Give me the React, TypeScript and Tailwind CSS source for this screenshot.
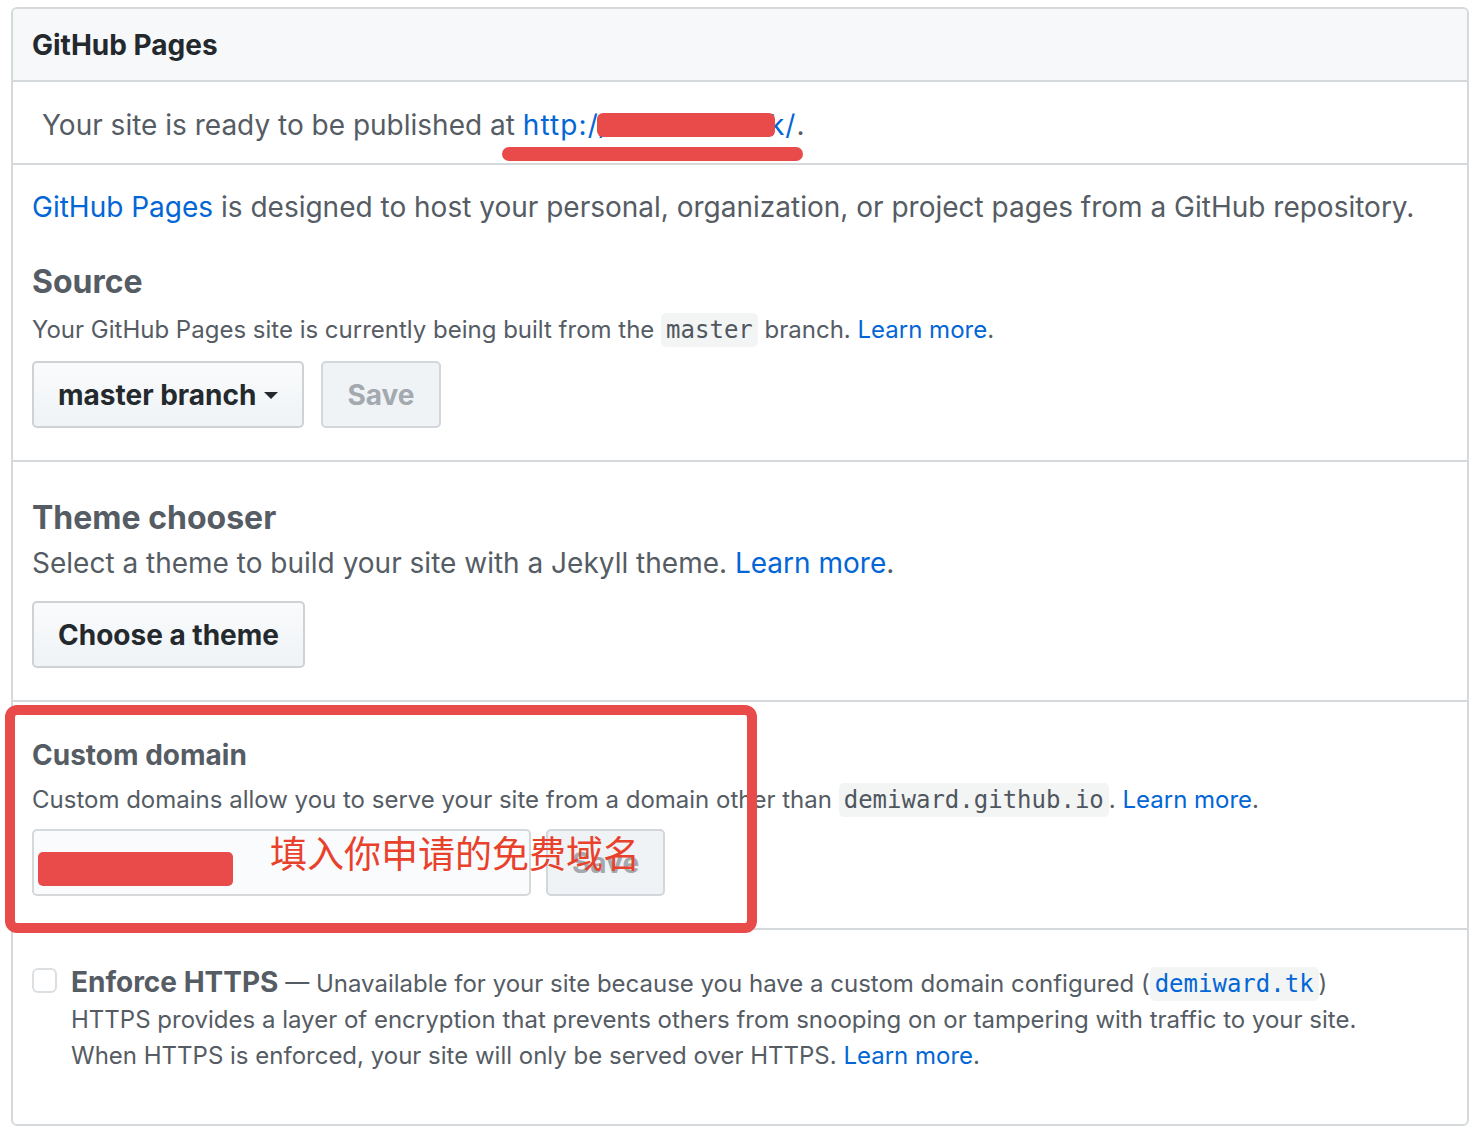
import { useState } from 'react';

const sans = { fontFamily: 'Inter, "Noto Sans", "Liberation Sans", sans-serif' };
const mono = { fontFamily: '"DejaVu Sans Mono", "Liberation Mono", monospace' };
const cjk = { fontFamily: '"Noto Sans CJK SC", "Noto Sans", sans-serif' };

function Code({ children, blue }: { children: React.ReactNode; blue?: boolean }) {
  return (
    <code
      style={mono}
      className={`rounded-[5px] bg-[#f3f4f4] px-[5px] py-[3px] text-[24px] ${blue ? 'text-[#0366d6]' : 'text-[#4f565e]'}`}
    >
      {children}
    </code>
  );
}

function Btn({ children, disabled, className = '' }: { children: React.ReactNode; disabled?: boolean; className?: string }) {
  return (
    <button
      className={`flex h-[67px] items-center rounded-[5px] border-2 px-6 text-[28px] font-bold ${
        disabled
          ? 'border-[#d3d6da] bg-[#eff3f6] text-[#a3a9af]'
          : 'border-[#cfd2d5] bg-gradient-to-b from-[#fafbfc] to-[#eff3f6] text-[#24292e]'
      } ${className}`}
    >
      {children}
    </button>
  );
}

export default function App() {
  const [https, setHttps] = useState(false);

  return (
    <div style={sans} className="relative h-[1142px] w-[1484px] bg-white pt-[7px] text-[#555c64]">
      <div className="ml-[11px] w-[1458px] overflow-hidden rounded-md border-2 border-[#d6d9dc]">
        {/* header */}
        <div className="flex h-[73px] items-center border-b-2 border-[#d6d9dc] bg-[#f6f8fa] px-[19px]">
          <h2 className="text-[28px] font-bold text-[#24292e]">GitHub Pages</h2>
        </div>

        {/* notice */}
        <div className="flex h-[83px] items-center border-b-2 border-[#d6d9dc] px-[29px] pt-[4px] text-[28px]">
          Your site is ready to be published at&nbsp;
          <a className="tracking-[1.1px] text-[#0366d6]">http://demiward.tk/</a>.
        </div>

        {/* source */}
        <div className="border-b-2 border-[#d6d9dc] px-[19px] pb-[32px] pt-[24px]">
          <p className="text-[28px] leading-[36px]">
            <a className="text-[#0366d6]">GitHub Pages</a> is designed to host your personal, organization, or project
            pages from a GitHub repository.
          </p>
          <h3 className="mt-[37px] text-[32px] font-bold leading-[40px]">Source</h3>
          <p className="mt-[12px] text-[24px] leading-[32px]">
            Your GitHub Pages site is currently being built from the <Code>master</Code> branch.{' '}
            <a className="text-[#0366d6]">Learn more</a>.
          </p>
          <div className="mt-[15px] flex gap-[17px]">
            <Btn>
              master branch
              <span className="ml-[8px] mt-[2px] h-0 w-0 border-x-[7px] border-t-[7px] border-x-transparent border-t-[#24292e]" />
            </Btn>
            <Btn disabled>Save</Btn>
          </div>
        </div>

        {/* theme chooser */}
        <div className="border-b-2 border-[#d6d9dc] px-[19px] pb-[32px] pt-[36px]">
          <h3 className="text-[32px] font-bold leading-[40px]">Theme chooser</h3>
          <p className="mt-[7px] text-[28px] leading-[36px]">
            Select a theme to build your site with a Jekyll theme. <a className="text-[#0366d6]">Learn more</a>.
          </p>
          <div className="mt-[20px] flex">
            <Btn>Choose a theme</Btn>
          </div>
        </div>

        {/* custom domain */}
        <div className="border-b-2 border-[#d6d9dc] px-[19px] pb-[32px] pt-[35px]">
          <h3 className="text-[28px] font-bold leading-[36px]">Custom domain</h3>
          <p className="mt-[11px] text-[24px] leading-[32px]">
            Custom domains allow you to serve your site from a domain other than <Code>demiward.github.io</Code>.{' '}
            <a className="text-[#0366d6]">Learn more</a>.
          </p>
          <div className="mt-[13px] flex gap-[15px]">
            <input
              defaultValue="demiward.tk"
              className="h-[67px] w-[499px] rounded-[5px] border-2 border-[#d6d9dc] bg-[#fafbfc] px-[14px] pt-[6px] text-[24px] text-[#24292e] outline-none"
            />
            <Btn disabled>Save</Btn>
          </div>
        </div>

        {/* https */}
        <div className="flex gap-[14px] px-[19px] pb-[50px] pt-[34px]">
          <button
            onClick={() => setHttps(!https)}
            className="mt-[4px] h-[25px] w-[25px] shrink-0 rounded-[6px] border-2 border-[#dcdfe2] bg-white"
          />
          <div className="text-[24px] leading-[36px]">
            <div>
              <span className="text-[28px] font-bold">Enforce HTTPS</span> — Unavailable for your site because you have
              a custom domain configured (<Code blue>demiward.tk</Code>)
            </div>
            <div>
              HTTPS provides a layer of encryption that prevents others from snooping on or tampering with traffic to
              your site.
            </div>
            <div>
              When HTTPS is enforced, your site will only be served over HTTPS.{' '}
              <a className="text-[#0366d6]">Learn more</a>.
            </div>
          </div>
        </div>
      </div>

      {/* annotations drawn over the screenshot */}
      <div className="absolute left-[597px] top-[113px] h-[24px] w-[178px] rounded-[6px] bg-[#e94b4b]" />
      <div className="absolute left-[502px] top-[147px] h-[14px] w-[301px] rounded-full bg-[#e94b4b]" />
      <div className="absolute left-[5px] top-[705px] h-[228px] w-[752px] rounded-[12px] border-[10px] border-[#e94b4b]" />
      <div className="absolute left-[38px] top-[852px] h-[34px] w-[195px] rounded-[5px] bg-[#e94b4b]" />
      <div style={cjk} className="absolute left-[270px] top-[828px] text-[37px] leading-[48px] text-[#e8412c]">
        填入你申请的免费域名
      </div>
    </div>
  );
}
